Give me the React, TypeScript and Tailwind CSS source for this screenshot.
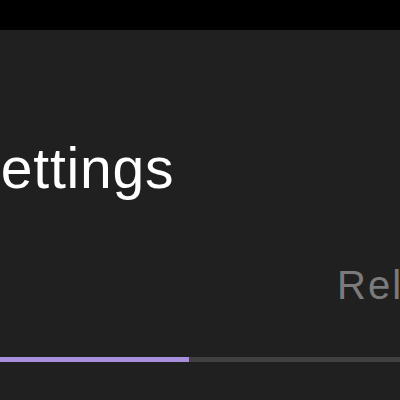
export default function App() {
  return (
    <div className="w-[400px] h-[400px] overflow-hidden bg-[#202020] flex flex-col" style={{ fontFamily: '"Liberation Sans", Arial, sans-serif' }}>
      <div className="h-[30px] bg-black shrink-0" />
      <div className="mt-[110px] ml-[-38px] text-[57px] leading-none tracking-[0.8px] text-white whitespace-nowrap">Settings</div>
      <div className="mt-[68px] ml-[337px] text-[40px] leading-none tracking-[2px] text-[#7b7b7b] whitespace-nowrap">Release notes</div>
      <div className="mt-[52px] h-[5px] w-full bg-[#414141] flex">
        <div className="h-full w-[189px] bg-[#a78fdb]" />
      </div>
    </div>
  );
}
